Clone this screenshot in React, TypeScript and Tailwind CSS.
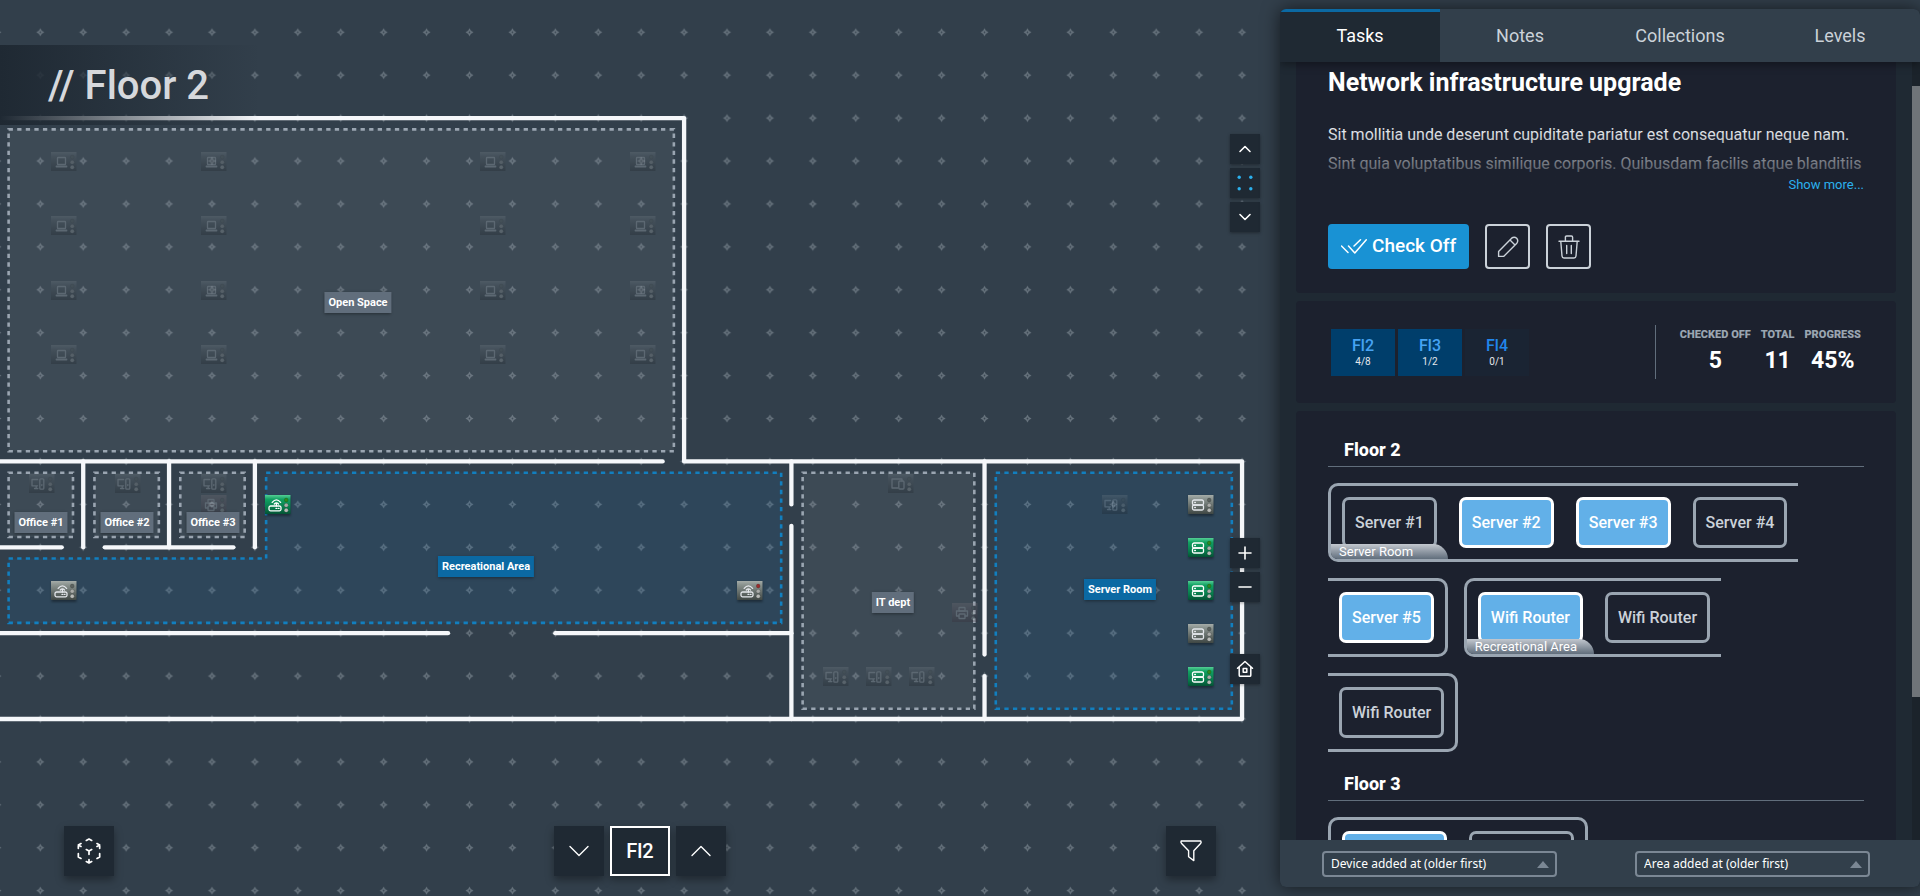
import type { ReactNode } from "react";

/* ---------- floor plan geometry ---------- */

const UNIT = 42.92;
const gx = (k: number) => 40.3 + k * UNIT;
const gy = (v: number) => 118.1 + v * UNIT;

type Point = [number, number];
const toPath = (points: Point[]) =>
  points.map(([k, v], i) => `${i === 0 ? "M" : "L"}${gx(k)} ${gy(v)}`).join(" ");

const rect = (x1: number, y1: number, x2: number, y2: number): Point[] => [
  [x1, y1],
  [x2, y1],
  [x2, y2],
  [x1, y2],
];

const WALLS: Point[][] = [
  [[-1.5, 0], [15, 0], [15, 8], [28, 8], [28, 14], [-1.5, 14]],
  [[-1.5, 8], [14.5, 8]],
  [[1, 8], [1, 10]],
  [[3, 8], [3, 10]],
  [[5, 8], [5, 10]],
  [[-1.5, 10], [0.5, 10]],
  [[1.5, 10], [4.5, 10]],
  [[-1.5, 12], [9.5, 12]],
  [[12, 12], [17.5, 12]],
  [[17.5, 8], [17.5, 9]],
  [[17.5, 9.5], [17.5, 14]],
  [[22, 8], [22, 12.5]],
  [[22, 13], [22, 14]],
];

const ZONES: { points: Point[]; active: boolean }[] = [
  { points: rect(-0.75, 0.25, 14.75, 7.75), active: false },
  { points: rect(-0.75, 8.25, 0.75, 9.75), active: false },
  { points: rect(1.25, 8.25, 2.75, 9.75), active: false },
  { points: rect(3.25, 8.25, 4.75, 9.75), active: false },
  { points: rect(17.75, 8.25, 21.75, 13.75), active: false },
  { points: rect(22.25, 8.25, 27.75, 13.75), active: true },
  {
    points: [[5.25, 8.25], [17.25, 8.25], [17.25, 11.75], [-0.75, 11.75], [-0.75, 10.25], [5.25, 10.25]],
    active: true,
  },
];

type Kind = "laptop" | "pc" | "printer" | "router" | "server" | "tablet";
type State = "dim" | "todo" | "done";
type Device = { kind: Kind; k: number; v: number; state: State };

const DEVICES: Device[] = [
  ...[1, 2.5, 4, 5.5].flatMap((v) =>
    [0.5, 4, 10.5, 14].map((k): Device => ({ kind: "laptop", k, v, state: "dim" })),
  ),
  { kind: "pc", k: 0, v: 8.5, state: "dim" },
  { kind: "pc", k: 2, v: 8.5, state: "dim" },
  { kind: "pc", k: 4, v: 8.5, state: "dim" },
  { kind: "printer", k: 4, v: 9, state: "dim" },
  { kind: "router", k: 5.5, v: 9, state: "done" },
  { kind: "router", k: 0.5, v: 11, state: "todo" },
  { kind: "router", k: 16.5, v: 11, state: "todo" },
  { kind: "tablet", k: 20, v: 8.5, state: "dim" },
  { kind: "printer", k: 21.5, v: 11.5, state: "dim" },
  { kind: "pc", k: 18.5, v: 13, state: "dim" },
  { kind: "pc", k: 19.5, v: 13, state: "dim" },
  { kind: "pc", k: 20.5, v: 13, state: "dim" },
  { kind: "pc", k: 25, v: 9, state: "dim" },
  { kind: "server", k: 27, v: 9, state: "todo" },
  { kind: "server", k: 27, v: 10, state: "done" },
  { kind: "server", k: 27, v: 11, state: "done" },
  { kind: "server", k: 27, v: 12, state: "todo" },
  { kind: "server", k: 27, v: 13, state: "done" },
];

/* Glyphs are drawn in a 12x12 box centred on the origin. */
const GLYPHS: Record<Kind, ReactNode> = {
  laptop: (
    <>
      <rect x="-3.5" y="-4.5" width="8" height="7" rx="0.6" />
      <path d="M-4.5 4.5H5.5" strokeWidth="1.8" />
    </>
  ),
  pc: (
    <>
      <path d="M-1.4 -4.5H-7V1.8H-1.4M-2.8 2V4.5M-4.5 4.5H-1.2" />
      <rect x="0.8" y="-5.2" width="4" height="10.4" rx="1" />
      <path d="M2.8 0.6V1.6" />
    </>
  ),
  printer: (
    <>
      <rect x="-3" y="-5.5" width="6" height="3.5" rx="0.6" />
      <path d="M-3 3H-5.5V-2H5.5V3H3" />
      <rect x="-3" y="1" width="6" height="4.5" rx="0.6" />
    </>
  ),
  router: (
    <>
      <rect x="-6" y="1" width="12" height="4.8" rx="1.6" />
      <path d="M1.4 1V-1.2M-2.8 -2.6Q1.4 -7.6 5.6 -2.6M-0.7 -1Q1.4 -3.4 3.5 -1M1 3.4H1.8M3.4 3.4H4" />
    </>
  ),
  server: (
    <>
      <rect x="-5.5" y="-5" width="11" height="5" rx="1.6" />
      <rect x="-5.5" y="0" width="11" height="5" rx="1.6" />
      <path d="M-3.3 -2.5H-2.6M-3.3 2.5H-2.6" />
    </>
  ),
  tablet: (
    <>
      <path d="M0 4H-6V-5H4V-3" />
      <rect x="0.8" y="-3" width="5.2" height="8" rx="1" />
    </>
  ),
};

function bodyFill(kind: Kind, state: State) {
  if (state === "done") return "url(#bodyDone)";
  if (state === "todo") return "url(#bodyTodo)";
  return kind === "printer" ? "url(#bodyPrinter)" : "url(#bodyDim)";
}

function DeviceMark({ kind, k, v, state }: Device) {
  const led = kind === "router" && k > 10 ? "#9b2c2c" : state === "done" ? "#2f8a1f" : "#5b625f";
  return (
    <g transform={`translate(${Math.round(gx(k) + 2)} ${Math.round(gy(v))})`} opacity={state === "dim" ? 0.22 : 1}>
      {state !== "dim" && (
        <rect x="-12.5" y="-8" width="25" height="20" fill="#000" opacity="0.35" filter="url(#soft)" />
      )}
      <rect x="-13" y="-9" width="25.5" height="19" fill={bodyFill(kind, state)} />
      <g
        transform="translate(-3 1)"
        fill="none"
        stroke={state === "done" ? "#fff" : state === "todo" ? "#e4e7eb" : "#cbd2d9"}
        strokeWidth="1.3"
        strokeLinecap="round"
        strokeLinejoin="round"
      >
        {GLYPHS[kind]}
      </g>
      <circle cx="8.2" cy="-4" r="1.9" fill={led} stroke="#0004" strokeWidth="0.6" />
      <circle cx="8.2" cy="1.2" r="2" fill="#a9aba8" stroke="#0004" strokeWidth="0.6" />
      <circle cx="8.2" cy="6.2" r="2" fill="#b9bbb8" stroke="#0004" strokeWidth="0.6" />
    </g>
  );
}

function FloorPlan() {
  return (
    <svg className="absolute inset-0 h-full w-full" role="img" aria-label="Floor 2 plan">
      <defs>
        <pattern id="stars" width={UNIT} height={UNIT} patternUnits="userSpaceOnUse" x={gx(-0.5)} y={gy(-0.5)}>
          <g transform={`translate(${UNIT / 2} ${UNIT / 2})`}>
            <path d="M0 -4L1.4 -1.4L4 0L1.4 1.4L0 4L-1.4 1.4L-4 0L-1.4 -1.4Z" fill="#69757f" />
            <circle r="0.9" fill="#35424e" />
          </g>
        </pattern>
        <linearGradient id="bodyTodo" x1="0" y1="0" x2="0" y2="1">
          <stop offset="0" stopColor="#a5aca8" />
          <stop offset="0.2" stopColor="#8a938f" />
          <stop offset="1" stopColor="#3f4744" />
        </linearGradient>
        <linearGradient id="bodyDim" x1="0" y1="0" x2="0" y2="1">
          <stop offset="0" stopColor="#8a949c" />
          <stop offset="0.25" stopColor="#5c656c" />
          <stop offset="1" stopColor="#14191d" />
        </linearGradient>
        <linearGradient id="bodyPrinter" x1="0" y1="0" x2="0" y2="1">
          <stop offset="0" stopColor="#8a7f86" />
          <stop offset="1" stopColor="#35232e" />
        </linearGradient>
        <linearGradient id="bodyDone" x1="0" y1="0" x2="0" y2="1">
          <stop offset="0" stopColor="#55cf95" />
          <stop offset="0.22" stopColor="#12a163" />
          <stop offset="0.7" stopColor="#07794a" />
          <stop offset="1" stopColor="#045234" />
        </linearGradient>
        <filter id="soft" x="-20%" y="-20%" width="140%" height="140%">
          <feGaussianBlur stdDeviation="1.2" />
        </filter>
      </defs>
      <rect width={gx(28.4)} height="100%" fill="url(#stars)" />
      <g strokeWidth="2.6" strokeDasharray="4.3 4.284">
        {ZONES.map(({ points, active }, i) => (
          <path
            key={i}
            d={`${toPath(points)}Z`}
            transform="translate(0.5 0.5)"
            fill={active ? "#2068a9" : "#9aa5b1"}
            fillOpacity={active ? 0.17 : 0.11}
            stroke={active ? "#127fbf" : "#9aa5b1"}
          />
        ))}
      </g>
      <g fill="none" stroke="#f5f7fa" strokeWidth="4.3" strokeLinecap="round" strokeLinejoin="round">
        {WALLS.map((points, i) => (
          <path key={i} d={toPath(points)} />
        ))}
      </g>
      {DEVICES.map((device, i) => (
        <DeviceMark key={i} {...device} />
      ))}
    </svg>
  );
}

function AreaLabel({ place, active = false, children }: { place: string; active?: boolean; children: ReactNode }) {
  return (
    <span
      className={`absolute -translate-x-1/2 px-1 text-[11px] leading-[21px] font-bold whitespace-nowrap text-white shadow-[0_1px_3px_rgba(0,0,0,0.4)] ${
        active ? "bg-[#0b69a3]" : "bg-[#616e7c]"
      } ${place}`}
    >
      {children}
    </span>
  );
}

/* ---------- map controls ---------- */

function Stroke({ size, d, width = 1 }: { size: number; d: string; width?: number }) {
  return (
    <svg
      width={size}
      height={size}
      viewBox={`0 0 ${size} ${size}`}
      fill="none"
      stroke="currentColor"
      strokeWidth={width}
      strokeLinecap="round"
      strokeLinejoin="round"
      aria-hidden="true"
    >
      <path d={d} />
    </svg>
  );
}

function SmallButton({ label, children }: { label: string; children: ReactNode }) {
  return (
    <button
      type="button"
      aria-label={label}
      className="flex size-[30px] items-center justify-center bg-[#1f2933] text-white shadow-[0_1px_3px_rgba(0,0,0,0.35)]"
    >
      {children}
    </button>
  );
}

function LargeButton({ label, children }: { label: string; children: ReactNode }) {
  return (
    <button
      type="button"
      aria-label={label}
      className="flex size-[50px] items-center justify-center bg-[#1f2933] text-white shadow-[0_4px_8px_rgba(0,0,0,0.35)]"
    >
      {children}
    </button>
  );
}

function MapView() {
  return (
    <main className="relative min-w-0 flex-1 overflow-hidden">
      <FloorPlan />
      <AreaLabel place="left-[358px] top-[292px]">Open Space</AreaLabel>
      <AreaLabel place="left-[41px] top-[512px]">Office #1</AreaLabel>
      <AreaLabel place="left-[127px] top-[512px]">Office #2</AreaLabel>
      <AreaLabel place="left-[213px] top-[512px]">Office #3</AreaLabel>
      <AreaLabel place="left-[486px] top-[556px]" active>Recreational Area</AreaLabel>
      <AreaLabel place="left-[893px] top-[592px]">IT dept</AreaLabel>
      <AreaLabel place="left-[1120px] top-[579px]" active>Server Room</AreaLabel>

      <h1 className="absolute top-[45px] left-0 h-20 w-[260px] bg-linear-to-r from-[#1f2933] to-transparent pl-12 text-[40px] leading-[82px] font-medium whitespace-nowrap text-[#d6d8dc]">
        {"// Floor 2"}
      </h1>

      <div className="absolute top-[134px] right-5 flex flex-col gap-1">
        <SmallButton label="Pan up">
          <Stroke size={14} width={1.6} d="M2 9.5L7 4.5L12 9.5" />
        </SmallButton>
        <SmallButton label="Center">
          <svg width="16" height="16" viewBox="0 0 16 16" fill="#2bb0ed" aria-hidden="true">
            <circle cx="2.2" cy="2.2" r="1.7" />
            <circle cx="13.8" cy="2.2" r="1.7" />
            <circle cx="2.2" cy="13.8" r="1.7" />
            <circle cx="13.8" cy="13.8" r="1.7" />
          </svg>
        </SmallButton>
        <SmallButton label="Pan down">
          <Stroke size={14} width={1.6} d="M2 4.5L7 9.5L12 4.5" />
        </SmallButton>
      </div>
      <div className="absolute top-[538px] right-5 flex flex-col gap-1">
        <SmallButton label="Zoom in">
          <Stroke size={16} width={1.6} d="M8 2V14M2 8H14" />
        </SmallButton>
        <SmallButton label="Zoom out">
          <Stroke size={16} width={1.6} d="M2 8H14" />
        </SmallButton>
      </div>
      <div className="absolute top-[654px] right-5">
        <SmallButton label="Home">
          <Stroke size={18} width={1.5} d="M1.5 8.2L9 1.5L16.5 8.2M3.2 7V15.2Q3.2 16.3 4.3 16.3H13.7Q14.8 16.3 14.8 15.2V7M7.2 8.6H10.8V12.2H7.2Z" />
        </SmallButton>
      </div>

      <div className="absolute inset-x-0 bottom-5 grid grid-cols-3 items-center px-16">
        <LargeButton label="3D view">
          <svg
            className="size-8"
            viewBox="0 0 24 24"
            fill="none"
            stroke="currentColor"
            strokeWidth="1.3"
            strokeLinecap="round"
            strokeLinejoin="round"
            aria-hidden="true"
          >
            <path d="M6 17.6L4 16.5V14M4 10V7.5L6 6.4M10 4.1L12 3L14 4.1M18 6.4L20 7.5V10M20 14V16.5L18 17.6M14 19.9L12 21L10 19.9M12 12L14 10.9M18 8.6L20 7.5M12 12V14.5M12 18.5V21M12 12L10 10.9M6 8.6L4 7.5" />
          </svg>
        </LargeButton>
        <div className="flex justify-center gap-1.5">
          <LargeButton label="Lower floor">
            <Stroke size={20} width={1.4} d="M1 5.5L10 14.5L19 5.5" />
          </LargeButton>
          <button
            type="button"
            className="h-[50px] w-[60px] border-2 border-white bg-[#1f2933] text-xl font-medium text-white shadow-[0_4px_8px_rgba(0,0,0,0.35)]"
          >
            Fl2
          </button>
          <LargeButton label="Upper floor">
            <Stroke size={20} width={1.4} d="M1 14.5L10 5.5L19 14.5" />
          </LargeButton>
        </div>
        <div className="flex justify-end">
          <LargeButton label="Filter">
            <Stroke size={24} width={1.4} d="M2.2 2H21.8Q22.6 3.4 21.6 4.5L14.8 11.8V21.6L9.6 17.8V11.8L2.6 4.5Q1.4 3.2 2.2 2Z" />
          </LargeButton>
        </div>
      </div>
    </main>
  );
}

/* ---------- side panel ---------- */

const TABS = ["Tasks", "Notes", "Collections", "Levels"];

function Card({ className, children }: { className: string; children: ReactNode }) {
  return <section className={`bg-[#1c212e] px-8 ${className}`}>{children}</section>;
}

function TaskCard() {
  return (
    <Card className="rounded-b-[4px] pb-6">
      <h2 className="pt-[5px] text-[25px] leading-8 font-bold text-white">Network infrastructure upgrade</h2>
      <div className="relative mt-[21px] h-[73px] overflow-hidden text-base leading-[29px] text-[#e4e7eb]">
        <p>
          Sit mollitia unde deserunt cupiditate pariatur est consequatur neque nam. Sint quia voluptatibus similique
          corporis. Quibusdam facilis atque blanditiis
        </p>
        <div className="absolute inset-0 bg-linear-to-b from-transparent from-15% to-[#1c212e] to-95%" />
        <a href="#more" className="absolute right-0 bottom-0 text-[13px] leading-4 text-[#2bb0ed]">
          Show more...
        </a>
      </div>
      <div className="mt-[31px] flex gap-4">
        <button
          type="button"
          className="flex h-[45px] items-center gap-1 rounded-[4px] bg-[#1992d4] px-[13px] text-[19px] font-medium whitespace-nowrap text-white"
        >
          <Stroke size={27} width={1.5} d="M0.5 13L7 19.5M13 13L19.5 6.8M7.5 13L13.8 20L25.3 6.8" />
          Check Off
        </button>
        <button
          type="button"
          aria-label="Edit"
          className="flex size-[45px] items-center justify-center rounded-[4px] border-2 border-[#cbd2d9] text-[#cbd2d9]"
        >
          <Stroke size={22} width={1.4} d="M1.6 20.4V15.4L14.4 2.4Q17.2 0.2 19.7 2.3Q21.8 4.8 19.6 7.6L6.6 20.4ZM13 4L18 9" />
        </button>
        <button
          type="button"
          aria-label="Delete"
          className="flex size-[45px] items-center justify-center rounded-[4px] border-2 border-[#cbd2d9] text-[#cbd2d9]"
        >
          <Stroke size={24} width={1.4} d="M2 6.2H22M8.4 6V2.2Q8.4 1 9.6 1H14.4Q15.6 1 15.6 2.2V6M3.8 6.5L5 21Q5.2 23 7 23H17Q18.8 23 19 21L20.2 6.5M9.7 10.5V18.5M14.3 10.5V18.5" />
        </button>
      </div>
    </Card>
  );
}

const FLOORS = [
  { name: "Fl2", count: "4/8", active: true },
  { name: "Fl3", count: "1/2", active: true },
  { name: "Fl4", count: "0/1", active: false },
];

const STATS = [
  { label: "Checked off", value: "5" },
  { label: "Total", value: "11" },
  { label: "Progress", value: "45%" },
];

function SummaryCard() {
  return (
    <Card className="flex items-center justify-between rounded-[4px] py-6">
      <div className="flex gap-[3px] pl-[3px]">
        {FLOORS.map(({ name, count, active }) => (
          <button
            key={name}
            type="button"
            className={`flex h-[47px] w-16 flex-col items-center justify-center pt-0.5 ${
              active ? "bg-[#003e6b] text-[#47a3f3]" : "bg-[#1a2433] text-[#2186eb]"
            }`}
          >
            <span className="text-base leading-[18px] font-medium">{name}</span>
            <span className="text-[10px] leading-[14px] text-[#e4e7eb]">{count}</span>
          </button>
        ))}
      </div>
      <dl className="flex h-[54px] gap-2.5 border-l border-[#616e7c] pt-1 pr-[3px] pl-6 text-center">
        {STATS.map(({ label, value }) => (
          <div key={label}>
            <dt className="text-[11px] leading-3 font-black text-[#9aa5b1] uppercase">{label}</dt>
            <dd className="mt-1.5 text-[23px] leading-7 font-bold text-white">{value}</dd>
          </div>
        ))}
      </dl>
    </Card>
  );
}

type Chip = { name: string; done: boolean };
type Segment = { area?: string; openLeft?: boolean; openRight?: boolean; chips: Chip[] };

function AreaSegment({ area, openLeft, openRight, chips }: Segment) {
  return (
    <div
      className={`flex h-[79px] items-center gap-[22px] border-y-[3px] border-[#9aa5b1] px-[11px] ${
        openLeft ? "" : "rounded-l-[10px] border-l-[3px]"
      } ${openRight ? "" : "rounded-r-[10px] border-r-[3px]"}`}
    >
      {chips.map(({ name, done }, i) => (
        <div key={i} className="relative">
          <button
            type="button"
            className={`h-[51px] rounded-[7px] border-[3px] px-[10px] text-base font-medium whitespace-nowrap ${
              done ? "border-white bg-[#62b0e8] text-white" : "border-[#9aa5b1] text-[#cbd2d9]"
            }`}
          >
            {name}
          </button>
          {i === 0 && area && (
            <span className="absolute -inset-x-[11px] -bottom-[11px] rounded-tr-[16px] rounded-bl-[7px] bg-linear-to-b from-[#c3c8cf] to-[#616e7c] pl-2 text-[13px] leading-[15px] whitespace-nowrap text-white">
              {area}
            </span>
          )}
        </div>
      ))}
    </div>
  );
}

function FloorHeading({ children }: { children: ReactNode }) {
  return (
    <h3 className="border-b border-[#616e7c] px-4 pb-0.5 text-lg leading-7 font-extrabold text-white">{children}</h3>
  );
}

function DevicesCard() {
  return (
    <Card className="rounded-t-[4px] pt-[25px]">
      <FloorHeading>Floor 2</FloorHeading>
      <div className="mt-4 flex flex-wrap gap-4">
        <AreaSegment
          area="Server Room"
          openRight
          chips={[
            { name: "Server #1", done: false },
            { name: "Server #2", done: true },
            { name: "Server #3", done: true },
            { name: "Server #4", done: false },
          ]}
        />
        <AreaSegment openLeft chips={[{ name: "Server #5", done: true }]} />
        <AreaSegment
          area="Recreational Area"
          openRight
          chips={[
            { name: "Wifi Router", done: true },
            { name: "Wifi Router", done: false },
          ]}
        />
        <AreaSegment openLeft chips={[{ name: "Wifi Router", done: false }]} />
      </div>
      <div className="pt-[18px]">
        <FloorHeading>Floor 3</FloorHeading>
      </div>
      <div className="mt-4 flex">
        <AreaSegment
          chips={[
            { name: "Wifi Router", done: true },
            { name: "Wifi Router", done: false },
          ]}
        />
      </div>
    </Card>
  );
}

function SortSelect({ id, label, option }: { id: string; label: string; option: string }) {
  return (
    <div className="relative w-[235px]">
      <label htmlFor={id} className="sr-only">
        {label}
      </label>
      <select
        id={id}
        className="h-[26px] w-full appearance-none rounded-[4px] border-2 border-[#7b8794] bg-transparent pl-[7px] font-['Noto_Sans',sans-serif] text-[12px] leading-5 text-white"
      >
        <option>{option}</option>
      </select>
      <svg className="pointer-events-none absolute top-2.5 right-2" width="12" height="7" viewBox="0 0 12 7" fill="#7b8794" aria-hidden="true">
        <path d="M6 0L12 7H0Z" />
      </svg>
    </div>
  );
}

function SidePanel() {
  return (
    <aside className="relative my-[9px] flex w-1/3 flex-col overflow-hidden rounded-[6px] bg-[#1f2933] shadow-[0_0_18px_rgba(0,0,0,0.6)]">
      <nav className="relative z-10 flex h-[53px] shrink-0 bg-[#323f4b] shadow-[0_3px_8px_rgba(0,0,0,0.35)]">
        {TABS.map((tab, i) => (
          <button
            key={tab}
            type="button"
            className={`flex-1 border-t-[3px] pb-[3px] text-lg ${
              i === 0 ? "border-[#0b69a3] bg-[#1f2933] text-white" : "border-transparent text-[#cbd2d9]"
            }`}
          >
            {tab}
          </button>
        ))}
      </nav>
      <div className="flex min-h-0 flex-1">
        <div className="min-w-0 flex-1 overflow-hidden px-4">
          <div className="flex flex-col gap-2">
            <TaskCard />
            <SummaryCard />
            <DevicesCard />
          </div>
        </div>
        <div className="w-2 bg-[#1b232b] pt-6">
          <div className="h-[81%] bg-[#6f7479]" />
        </div>
      </div>
      <footer className="relative z-10 flex h-[47px] shrink-0 items-center justify-between bg-[#323f4b] pr-[50px] pl-[42px]">
        <SortSelect id="device-sort" label="Sort devices" option="Device added at (older first)" />
        <SortSelect id="area-sort" label="Sort areas" option="Area added at (older first)" />
      </footer>
    </aside>
  );
}

export default function App() {
  return (
    <div className="flex h-screen overflow-hidden bg-[#323f4b] font-[Roboto,sans-serif]">
      <MapView />
      <SidePanel />
    </div>
  );
}
